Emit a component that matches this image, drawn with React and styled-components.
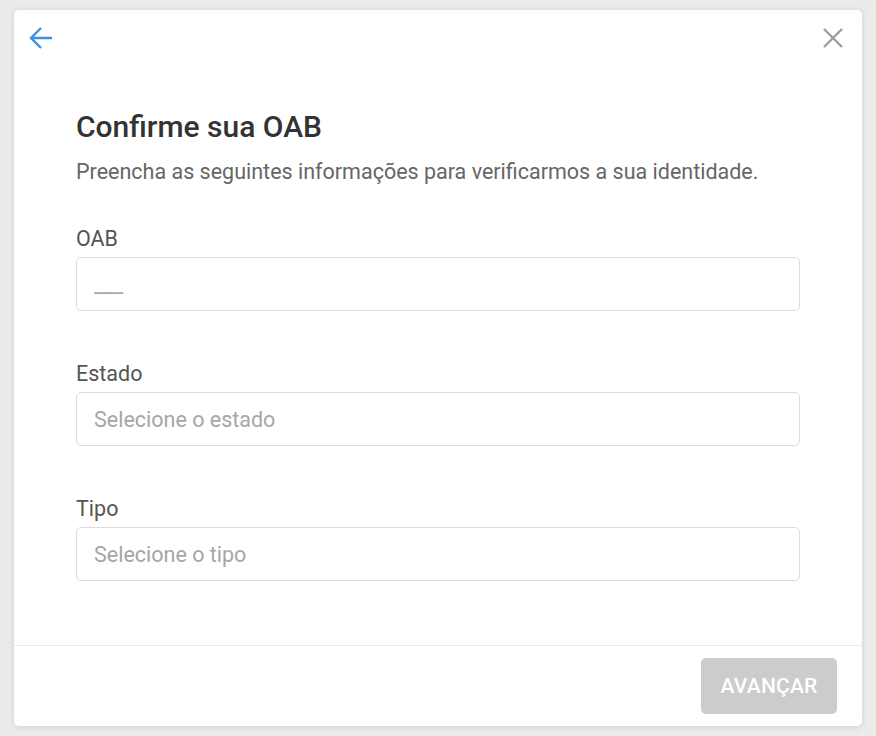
import React from "react";
import styled, { createGlobalStyle } from "styled-components";

const GlobalStyle = createGlobalStyle`
  html, body {
    margin: 0;
    padding: 0;
    background: #ebebeb;
    font-family: Roboto, "Liberation Sans", sans-serif;
  }
  * { box-sizing: border-box; }
`;

const Page = styled.div`
  width: 876px;
  height: 736px;
  padding: 10px 14px;
`;

const Card = styled.div`
  width: 848px;
  height: 716px;
  background: #fff;
  border-radius: 5px;
  box-shadow: 0 1px 6px rgba(0, 0, 0, 0.12);
  display: flex;
  flex-direction: column;
`;

const Header = styled.div`
  height: 56px;
  display: flex;
  align-items: center;
  justify-content: space-between;
  padding: 0 17px 0 15px;
`;

const IconButton = styled.button`
  border: none;
  background: none;
  padding: 0;
  width: 24px;
  height: 24px;
  display: flex;
  align-items: center;
  justify-content: center;
  cursor: pointer;
`;

const Body = styled.div`
  flex: 1;
  padding: 44px 62px 0;
`;

const Title = styled.h1`
  margin: 0;
  font-size: 30px;
  line-height: 34px;
  font-weight: 500;
  color: #333;
`;

const Subtitle = styled.p`
  margin: 15px 0 0;
  font-size: 21.5px;
  line-height: 26px;
  color: #666;
`;

const Field = styled.div`
  margin-top: ${(p) => (p.first ? "41px" : "50px")};
  display: flex;
  flex-direction: column;
  gap: 5px;
`;

const Label = styled.label`
  font-size: 21.5px;
  line-height: 26px;
  color: #555;
`;

const Input = styled.input`
  width: 724px;
  height: 54px;
  border: 1px solid #dcdcdc;
  border-radius: 5px;
  padding: 0 17px;
  font-family: inherit;
  font-size: 21.5px;
  color: #333;
  outline: none;
  &::placeholder {
    color: #a6a6a6;
  }
`;

const Footer = styled.div`
  height: 81px;
  border-top: 1px solid #eaeaea;
  display: flex;
  align-items: flex-start;
  justify-content: flex-end;
  padding: 12px 25px 0;
`;

const Button = styled.button`
  width: 136px;
  height: 56px;
  border: none;
  border-radius: 5px;
  background: #cccccc;
  color: #fff;
  font-family: inherit;
  font-size: 21px;
  font-weight: 500;
  letter-spacing: 0.2px;
  text-transform: uppercase;
`;

function App() {
  return (
    <>
      <GlobalStyle />
      <Page>
        <Card>
          <Header>
            <IconButton aria-label="Voltar">
              <svg width="24" height="24" viewBox="0 0 24 24" fill="none">
                <path
                  d="M2 12h21M12 2L2 12l10 10"
                  stroke="#3d8fe0"
                  strokeWidth="2.4"
                />
              </svg>
            </IconButton>
            <IconButton aria-label="Fechar">
              <svg width="20" height="20" viewBox="0 0 20 20" fill="none">
                <path d="M1 1l18 18M19 1L1 19" stroke="#9e9e9e" strokeWidth="2.4" />
              </svg>
            </IconButton>
          </Header>
          <Body>
            <Title>Confirme sua OAB</Title>
            <Subtitle>
              Preencha as seguintes informações para verificarmos a sua identidade.
            </Subtitle>
            <Field first>
              <Label>OAB</Label>
              <Input placeholder="___" />
            </Field>
            <Field>
              <Label>Estado</Label>
              <Input placeholder="Selecione o estado" />
            </Field>
            <Field>
              <Label>Tipo</Label>
              <Input placeholder="Selecione o tipo" />
            </Field>
          </Body>
          <Footer>
            <Button disabled>Avançar</Button>
          </Footer>
        </Card>
      </Page>
    </>
  );
}

export default App;
